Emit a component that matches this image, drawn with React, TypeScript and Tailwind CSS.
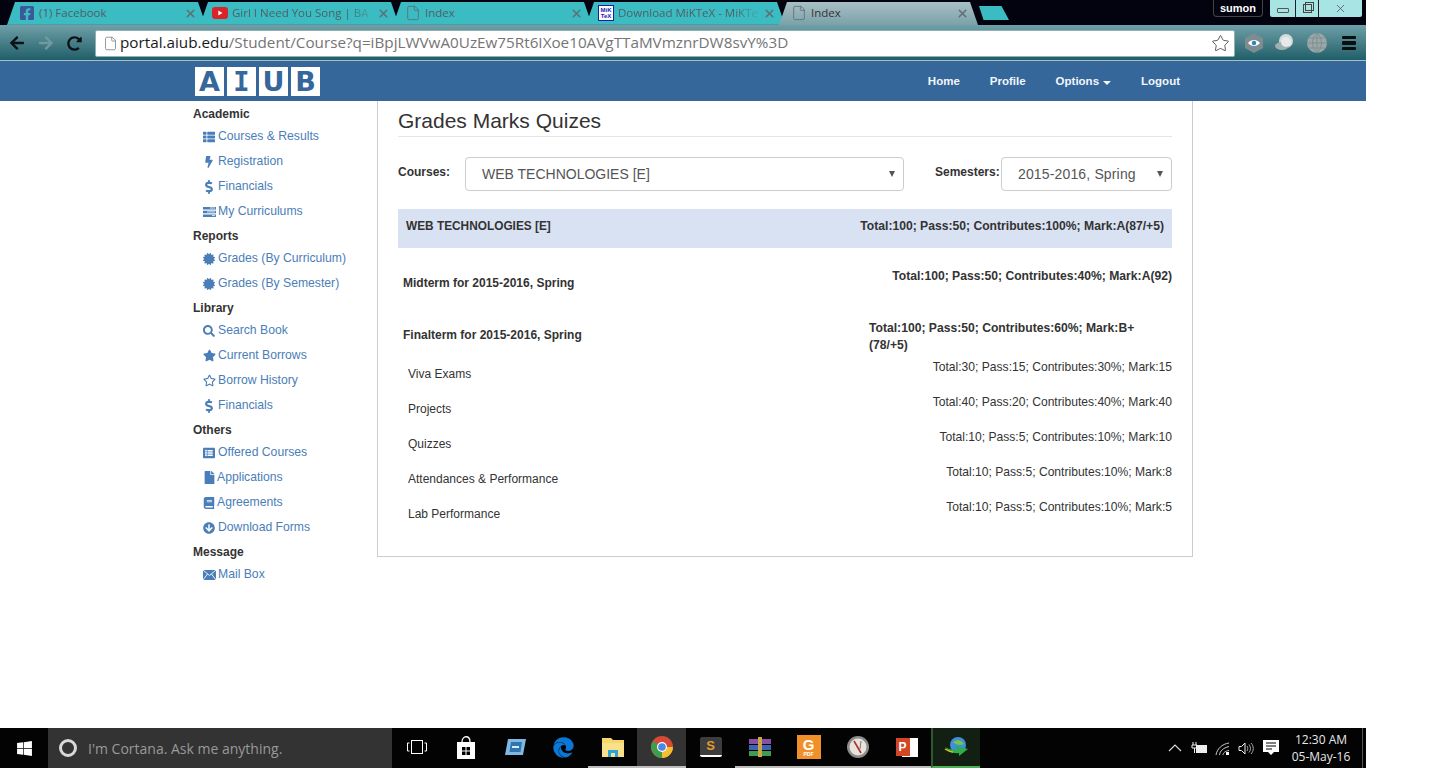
import type { ReactNode } from 'react';
import { File, Star, X } from 'lucide-react';
import {
  FaArrowCircleDown,
  FaArrowLeft,
  FaArrowRight,
  FaBolt,
  FaBook,
  FaCertificate,
  FaDollarSign,
  FaEdge,
  FaFacebookSquare,
  FaFile,
  FaListAlt,
  FaRedoAlt,
  FaRegStar,
  FaSearch,
  FaStar,
  FaThList,
  FaWindows,
} from 'react-icons/fa';

const LOGO = [
  { letter: 'A', font: 'font-["DejaVu_Sans",sans-serif]' },
  { letter: 'I', font: 'font-["DejaVu_Sans_Mono",monospace]' },
  { letter: 'U', font: 'font-["DejaVu_Sans",sans-serif]' },
  { letter: 'B', font: 'font-["DejaVu_Sans",sans-serif]' },
];
const NAV = ['Home', 'Profile'];

function TasksIcon() {
  return (
    <svg width="13" height="12" viewBox="0 0 13 12">
      <path d="M0 1h13v2.6H0zM0 4.7h13v2.6H0zM0 8.4h13V11H0z" fill="currentColor" />
      <path d="M7 2h5M4 5.900h8M9 9.600h3" stroke="#fff" strokeWidth="0.8" />
    </svg>
  );
}

function MailIcon() {
  return (
    <svg width="13" height="10" viewBox="0 0 13 10">
      <rect width="13" height="10" fill="currentColor" />
      <path d="M0 0l6.500 5.500L13 0M0 10l4.500-6M13 10L8.500 4" stroke="#fff" strokeWidth="0.9" fill="none" />
    </svg>
  );
}

const SIDEBAR: { title: string; items: { label: string; icon: ReactNode; narrow?: boolean }[] }[] = [
  {
    title: 'Academic',
    items: [
      { label: 'Courses & Results', icon: <FaThList size={12} /> },
      { label: 'Registration', icon: <FaBolt size={12} /> },
      { label: 'Financials', icon: <FaDollarSign size={14} className="-ml-[1px]" /> },
      { label: 'My Curriculums', icon: <TasksIcon /> },
    ],
  },
  {
    title: 'Reports',
    items: [
      { label: 'Grades (By Curriculum)', icon: <FaCertificate size={12} /> },
      { label: 'Grades (By Semester)', icon: <FaCertificate size={12} /> },
    ],
  },
  {
    title: 'Library',
    items: [
      { label: 'Search Book', icon: <FaSearch size={12} /> },
      { label: 'Current Borrows', icon: <FaStar size={13} /> },
      { label: 'Borrow History', icon: <FaRegStar size={13} /> },
      { label: 'Financials', icon: <FaDollarSign size={14} className="-ml-[1px]" /> },
    ],
  },
  {
    title: 'Others',
    items: [
      { label: 'Offered Courses', icon: <FaListAlt size={12} /> },
      { label: 'Applications', icon: <FaFile size={13} />, narrow: true },
      { label: 'Agreements', icon: <FaBook size={12} />, narrow: true },
      { label: 'Download Forms', icon: <FaArrowCircleDown size={12} /> },
    ],
  },
  {
    title: 'Message',
    items: [{ label: 'Mail Box', icon: <MailIcon /> }],
  },
];

const MARKS = [
  { label: 'Viva Exams', detail: 'Total:30; Pass:15; Contributes:30%; Mark:15' },
  { label: 'Projects', detail: 'Total:40; Pass:20; Contributes:40%; Mark:40' },
  { label: 'Quizzes', detail: 'Total:10; Pass:5; Contributes:10%; Mark:10' },
  { label: 'Attendances & Performance', detail: 'Total:10; Pass:5; Contributes:10%; Mark:8' },
  { label: 'Lab Performance', detail: 'Total:10; Pass:5; Contributes:10%; Mark:5' },
];

function PageFavicon() {
  return <File size={16} strokeWidth={1.2} className="text-[#5b6b70]" />;
}

function YoutubeFavicon() {
  return (
    <svg width="16" height="12" viewBox="0 0 16 12">
      <rect width="16" height="12" rx="3" fill="#d9252a" />
      <path d="M6.300 3.500v5l4.200-2.500z" fill="#fff" />
    </svg>
  );
}

function MiktexFavicon() {
  return (
    <div className="flex h-[16px] w-[16px] flex-col items-center justify-center border border-[#1a1ab0] bg-white text-[6px] font-bold leading-[6px] text-[#1a1ab0]">
      <span>MiK</span>
      <span>TeX</span>
    </div>
  );
}

const TABS: { title: string; icon: ReactNode; active?: boolean; fade?: boolean }[] = [
  { title: '(1) Facebook', icon: <FaFacebookSquare size={16} className="text-[#3b5998]" /> },
  { title: 'Girl I Need You Song | BA', icon: <YoutubeFavicon />, fade: true },
  { title: 'Index', icon: <PageFavicon /> },
  { title: 'Download MiKTeX - MiKTe', icon: <MiktexFavicon />, fade: true },
  { title: 'Index', icon: <PageFavicon />, active: true },
];

function TabStrip() {
  return (
    <div className="flex h-[25px] items-end justify-between bg-[#02030f] pl-[7px] pr-[4px]">
      <div className="flex items-end">
        {TABS.map((tab, i) => (
          <div
            key={i}
            className={
              'flex h-[23px] w-[199px] items-center pl-[12px] pr-[9px] [clip-path:polygon(8px_0,calc(100%-8px)_0,100%_100%,0_100%)] ' +
              (i > 0 ? '-ml-[6px] ' : '') +
              (tab.active
                ? 'bg-gradient-to-b from-[#a9c0c5] to-[#7ba1a9] pb-[1px]'
                : 'border-b border-[#4d9aa0] bg-[#3bbcc2]')
            }
          >
            <div className="flex w-[16px] shrink-0 justify-center">{tab.icon}</div>
            <span
              className={
                'ml-[4px] w-[144px] overflow-hidden whitespace-nowrap font-["Open_Sans",sans-serif] text-[11.500px] ' +
                (tab.active ? 'text-[#333] ' : 'text-[#4f5f66] ') +
                (tab.fade ? '[mask-image:linear-gradient(to_right,#000_80%,transparent)]' : '')
              }
            >
              {tab.title}
            </span>
            <X size={13} strokeWidth={3} className="ml-auto text-[#5e7177]" />
          </div>
        ))}
        <div className="mb-[5px] ml-[1px] h-[14px] w-[30px] bg-[#3bbcc2] [clip-path:polygon(0_0,75%_0,100%_100%,15%_100%)]" />
      </div>
      <div className="flex h-[25px] items-start">
        <div className="flex h-[17px] w-[50px] items-center justify-center rounded-b-[4px] border border-t-0 border-[#444] text-[11px] font-bold text-white">
          sumon
        </div>
        <div className="ml-[7px] flex h-[17px] w-[92px] rounded-b-[2px] bg-[#a9e4e4] text-[#333]">
          <div className="flex w-[25px] items-end justify-center pb-[4px]">
            <div className="h-[5px] w-[12px] rounded-[1px] border border-[#555]" />
          </div>
          <div className="flex w-[24px] items-center justify-center border-x border-[#222]">
            <div className="relative h-[9px] w-[9px] border border-[#444]">
              <div className="absolute -right-[3px] -top-[3px] h-[9px] w-[9px] border border-[#444]" />
            </div>
          </div>
          <div className="flex flex-1 items-center justify-center">
            <X size={13} strokeWidth={1.5} className="text-[#556]" />
          </div>
        </div>
      </div>
    </div>
  );
}

function Toolbar() {
  return (
    <div className="flex h-[36px] items-center border-b border-[#a5c0c5] bg-gradient-to-b from-[#6ea0a8] to-[#1f5f69] pt-[1px]">
      <div className="flex w-[95px] shrink-0 items-center pl-[9px]">
        <FaArrowLeft size={16} className="text-[#0b1114]" />
        <FaArrowRight size={16} className="ml-[13px] text-[#6f9aa2]" />
        <FaRedoAlt size={15} className="ml-[13px] text-[#0b1114]" />
      </div>
      <div className="flex h-[27px] w-[1140px] items-center rounded-[2px] border border-[#8fb0b5] bg-white pl-[7px] pr-[4px]">
        <File size={15} strokeWidth={1.2} className="text-[#777]" />
        <span className='-mt-[2px] ml-[2px] font-["Open_Sans",sans-serif] text-[15.250px] text-[#757575]'>
          <span className="text-[#1a1a1a]">portal.aiub.edu</span>
          /Student/Course?q=iBpjLWVwA0UzEw75Rt6IXoe10AVgTTaMVmznrDW8svY%3D
        </span>
        <Star size={19} strokeWidth={1} className="ml-auto text-[#333]" />
      </div>
      <div className="flex flex-1 items-center pl-[9px]">
        <svg width="20" height="20" viewBox="0 0 20 20">
          <path d="M10 0l9 5v10l-9 5-9-5V5z" fill="#7c8c90" />
          <path d="M4 10c3-4 9-4 12 0-3 4-9 4-12 0z" fill="#fff" />
          <circle cx="10" cy="10" r="2.200" fill="#2a86b8" />
        </svg>
        <svg width="22" height="20" viewBox="0 0 22 20" className="ml-[10px]">
          <circle cx="12" cy="8" r="7" fill="#d5dadb" />
          <ellipse cx="8" cy="13" rx="7" ry="4" fill="#9fb0b3" />
          <circle cx="12" cy="9" r="5" fill="#e6eaea" />
        </svg>
        <svg width="20" height="20" viewBox="0 0 20 20" className="ml-[11px]">
          <circle cx="10" cy="10" r="10" fill="#9aa8aa" />
          <path d="M0 10h20M10 0v20M2 5h16M2 15h16M10 0c-6 5-6 15 0 20M10 0c6 5 6 15 0 20" stroke="#7b8a8c" strokeWidth="0.8" fill="none" />
        </svg>
        <div className="ml-[15px] flex w-[14px] flex-col gap-[2px]">
          <div className="h-[3.500px] rounded-[1px] bg-[#0a0f10]" />
          <div className="h-[3.500px] rounded-[1px] bg-[#0a0f10]" />
          <div className="h-[3.500px] rounded-[1px] bg-[#0a0f10]" />
        </div>
      </div>
    </div>
  );
}

function SiteNav() {
  return (
    <div className="flex h-[40px] items-center bg-[#35679a] pl-[195px] pr-[171px] text-[11.500px] font-bold text-[#f2f6fa]">
      <div className="flex gap-[3px]">
        {LOGO.map(({ letter, font }) => (
          <div
            key={letter}
            className={
              'flex h-[29px] w-[29px] items-center justify-center bg-white text-[27px] font-bold leading-none text-[#35679a] ' +
              font
            }
          >
            {letter}
          </div>
        ))}
      </div>
      <div className="ml-auto flex items-center pt-[1px]">
        {NAV.map((item) => (
          <span key={item} className="px-[15px]">
            {item}
          </span>
        ))}
        <span className="flex items-center px-[15px]">
          Options
          <span className="ml-[4px] mt-[2px] h-0 w-0 border-x-[4px] border-t-[4px] border-x-transparent border-t-[#f2f6fa]" />
        </span>
        <span className="px-[15px]">Logout</span>
      </div>
    </div>
  );
}

function Sidebar() {
  return (
    <div className="w-[184px] shrink-0 text-[12.200px]">
      {SIDEBAR.map((group) => (
        <div key={group.title}>
          <div className="flex h-[22px] items-end text-[12px] font-bold leading-[17px] text-[#333]">
            {group.title}
          </div>
          {group.items.map((item) => (
            <div key={item.label} className="flex h-[25px] items-center pl-[10px] pt-[2px] text-[#4a7eb8]">
              <div className={'flex shrink-0 ' + (item.narrow ? 'w-[14px]' : 'w-[15px]')}>{item.icon}</div>
              <span className="whitespace-nowrap">{item.label}</span>
            </div>
          ))}
        </div>
      ))}
    </div>
  );
}

function SelectBox({ value, className }: { value: string; className: string }) {
  return (
    <div
      className={
        'flex h-[34px] items-center justify-between rounded-[4px] border border-[#ccc] pl-[16px] pr-[8px] text-[14px] text-[#555] ' +
        className
      }
    >
      <span className="whitespace-nowrap">{value}</span>
      <span className="h-0 w-0 border-x-[3px] border-t-[6px] border-x-transparent border-t-[#555]" />
    </div>
  );
}

function GradesPanel() {
  return (
    <div className="h-[456px] w-[816px] shrink-0 border-x border-b border-[#ccc] px-[20px] text-[12px] leading-[17px] text-[#333]">
      <div className="mb-[20px] flex h-[36px] items-end border-b border-[#e5e5e5] pb-[2px] text-[21px] leading-[26px]">
        Grades Marks Quizes
      </div>
      <div className="flex items-start">
        <span className="w-[67px] pt-[7px] font-bold">Courses:</span>
        <SelectBox value="WEB TECHNOLOGIES [E]" className="w-[439px]" />
        <span className="ml-[31px] w-[66px] pt-[7px] font-bold">Semesters:</span>
        <SelectBox value="2015-2016, Spring" className="w-[171px] tracking-[0.15px]" />
      </div>
      <div className="mt-[18px] flex h-[39px] justify-between bg-[#d9e2f2] pl-[8px] pr-[8px] pt-[9px] font-bold">
        <span className="text-[11.850px]">WEB TECHNOLOGIES [E]</span>
        <span className="text-[12.150px]">Total:100; Pass:50; Contributes:100%; Mark:A(87/+5)</span>
      </div>
      <div className="flex h-[71px] justify-between pt-[20px] font-bold">
        <span className="pl-[5px] pt-[7px]">Midterm for 2015-2016, Spring</span>
        <span className="text-[12.150px]">Total:100; Pass:50; Contributes:40%; Mark:A(92)</span>
      </div>
      <div className="flex h-[38px] justify-between font-bold">
        <span className="pl-[5px] pt-[8px]">Finalterm for 2015-2016, Spring</span>
        <span className="w-[303px] pt-px text-[12.150px]">
          Total:100; Pass:50; Contributes:60%; Mark:B+
          <br />
          (78/+5)
        </span>
      </div>
      {MARKS.map((row) => (
        <div key={row.label} className="flex h-[35px] justify-between">
          <span className="pl-[10px] pt-[9px]">{row.label}</span>
          <span className="pt-[2px] text-[12.100px]">{row.detail}</span>
        </div>
      ))}
    </div>
  );
}

function ChromeIcon() {
  return (
    <svg width="22" height="22" viewBox="0 0 22 22">
      <circle cx="11" cy="11" r="11" fill="#d84a38" />
      <path d="M11 11L1.500 16.500A11 11 0 0 0 11 22z" fill="#3f9d4d" />
      <path d="M11 11l-9.500 5.500A11 11 0 0 1 2 5z" fill="#3f9d4d" />
      <path d="M11 11h11A11 11 0 0 1 11 22z" fill="#f2c230" />
      <circle cx="11" cy="11" r="5" fill="#fff" />
      <circle cx="11" cy="11" r="3.800" fill="#4a88e8" />
    </svg>
  );
}

const TASK_APPS: { icon: ReactNode; underline?: string; bg?: string }[] = [
  {
    icon: (
      <svg width="20" height="14" viewBox="0 0 20 14">
        <rect x="4.500" y="0.500" width="11" height="13" stroke="#fff" fill="none" />
        <path d="M2.500 3H.500v8h2M17.500 3h2v8h-2" stroke="#fff" fill="none" />
      </svg>
    ),
  },
  {
    icon: (
      <svg width="20" height="23" viewBox="0 0 20 23">
        <path d="M6 6c0-7 8-7 8 0" stroke="#fff" strokeWidth="1.300" fill="none" />
        <path d="M1 6h18v17H1z" fill="#fff" />
        <path d="M6 11h3.500v3.500H6zM10.500 11H14v3.500h-3.500zM6 15.500h3.500V19H6zM10.500 15.500H14V19h-3.500z" fill="#000" />
      </svg>
    ),
  },
  {
    icon: (
      <svg width="23" height="16" viewBox="0 0 23 16">
        <path d="M5 0h18l-3 16H2z" fill="#7fb8e0" />
        <path d="M8 3h11l-1.500 10H6.500z" fill="#2f76b0" />
        <path d="M9 7h7v2H9z" fill="#dcecf8" />
      </svg>
    ),
  },
  { icon: <FaEdge size={21} className="text-[#0a78d6]" /> },
  {
    underline: 'border-[#bdbdbd]',
    icon: (
      <svg width="22" height="19" viewBox="0 0 22 19">
        <path d="M0 0h9l2 2h11v17H0z" fill="#f5d76e" />
        <path d="M0 5h22v14H0z" fill="#fbe08a" />
        <path d="M6 12h10v7h-3v-4H9v4H6z" fill="#2ba3d8" />
      </svg>
    ),
  },
  { underline: 'border-[#bdbdbd]', bg: 'bg-[#333]', icon: <ChromeIcon /> },
  {
    icon: (
      <div className="flex h-[20px] w-[22px] items-center justify-center rounded-[2px] border-b-2 border-white bg-[#3d3d3d] text-[13px] font-bold text-[#e69a2e]">
        S
      </div>
    ),
  },
  {
    underline: 'border-[#bdbdbd]',
    icon: (
      <svg width="24" height="20" viewBox="0 0 24 20">
        <path d="M1 2h22v5H1z" fill="#8a4f9e" />
        <path d="M1 8h22v5H1z" fill="#3d63b8" />
        <path d="M1 14h22v5H1z" fill="#3f9d4d" />
        <path d="M10 0h4v20h-4z" fill="#c9a64a" />
      </svg>
    ),
  },
  {
    underline: 'border-[#bdbdbd]',
    icon: (
      <div className="relative flex h-[24px] w-[24px] flex-col items-center justify-center bg-[#f0902a] font-bold leading-none text-white">
        <span className="text-[15px]">G</span>
        <span className="text-[5px]">PDF</span>
      </div>
    ),
  },
  {
    underline: 'border-[#bdbdbd]',
    icon: (
      <svg width="22" height="22" viewBox="0 0 22 22">
        <circle cx="11" cy="11" r="11" fill="#8c8c8c" />
        <circle cx="11" cy="11" r="8.500" fill="#e8e4dc" />
        <path d="M7 5l7 12" stroke="#b03030" strokeWidth="1.600" />
        <path d="M14 5l-1 8" stroke="#777" strokeWidth="1" />
      </svg>
    ),
  },
  {
    underline: 'border-[#bdbdbd]',
    icon: (
      <div className="relative flex h-[22px] w-[22px] justify-end">
        <div className="h-[19px] w-[16px] self-center bg-white" />
        <div className="absolute left-0 top-[2px] flex h-[18px] w-[14px] items-center justify-center bg-[#d24726] text-[12px] font-bold text-white">
          P
        </div>
      </div>
    ),
  },
  {
    underline: 'border-[#4caf50]',
    bg: 'bg-[#141f14] border-l-2 border-l-[#2c5a2c]',
    icon: (
      <svg width="25" height="21" viewBox="0 0 25 21">
        <circle cx="14" cy="8" r="8" fill="#3f8fd8" />
        <path d="M9 5c4-3 9-2 11 2-4 2-8 1-11-2z" fill="#7cc24a" />
        <path d="M1 10c5 3 9 3 13 2l-2-3 12 3-9 7v-3c-6 1-11-2-14-6z" fill="#2fae4e" />
        <path d="M1 12c3 2 5 3 8 3" stroke="#e0c020" strokeWidth="1.500" fill="none" />
      </svg>
    ),
  },
];

function Tray() {
  return (
    <div className="flex flex-1 items-center pl-[188px] text-[#e8e8e8]">
      <svg width="14" height="8" viewBox="0 0 14 8" className="shrink-0">
        <path d="M1 7l6-6 6 6" stroke="#ddd" strokeWidth="1.100" fill="none" />
      </svg>
      <svg width="17" height="12" viewBox="0 0 17 12" className="ml-[9px] shrink-0">
        <path d="M2 0v3M5 0v3M1 3h5v3H1zM3.500 6v5" stroke="#eee" strokeWidth="1" fill="none" />
        <rect x="5" y="3" width="11" height="8" fill="#eee" />
      </svg>
      <svg width="15" height="13" viewBox="0 0 15 13" className="ml-[7px] shrink-0">
        <path d="M1 13C2 7 7 2 14 1M4.500 13C5 9 8 6 14 4.500M8 13c0-2 2-4 6-4.500" stroke="#ccc" strokeWidth="1" fill="none" />
        <path d="M11 10h3v3h-3z" fill="#fff" />
      </svg>
      <svg width="16" height="13" viewBox="0 0 16 13" className="ml-[8px] shrink-0">
        <path d="M1 4.500h2.500L7 1v11L3.500 8.500H1z" stroke="#eee" strokeWidth="1" fill="none" />
        <path d="M9 4c1 1.500 1 3.500 0 5M11 2.500c2 2.500 2 5.500 0 8M13 1c3 3 3 8 0 11" stroke="#bbb" strokeWidth="0.900" fill="none" />
      </svg>
      <svg width="16" height="16" viewBox="0 0 16 16" className="ml-[9px] shrink-0">
        <path d="M0 0h16v12h-5l-3 3-3-3H0z" fill="#fff" />
        <path d="M3 3h10M3 6h10M3 9h6" stroke="#000" strokeWidth="1" />
      </svg>
      <div className='ml-[9px] flex w-[66px] shrink-0 flex-col items-center font-["Open_Sans",sans-serif] text-[12px] leading-[17px] text-[#e8e8e8]'>
        <span>12:30 AM</span>
        <span>05-May-16</span>
      </div>
      <div className="ml-auto mr-[3px] h-full w-px bg-[#555]" />
    </div>
  );
}

function Taskbar() {
  return (
    <div className="flex h-[40px] shrink-0 bg-[#030303]">
      <div className="flex w-[48px] items-center justify-center">
        <FaWindows size={17} className="text-white" />
      </div>
      <div className="flex w-[344px] items-center bg-[#333] pl-[11px]">
        <div className="h-[18px] w-[18px] rounded-full border-[3px] border-[#d8d8d8]" />
        <span className='ml-[11px] font-["Open_Sans",sans-serif] text-[14px] text-[#999]'>
          I'm Cortana. Ask me anything.
        </span>
      </div>
      {TASK_APPS.map((app, i) => (
        <div
          key={i}
          className={
            'flex h-[40px] w-[49px] items-center justify-center border-b-2 ' +
            (app.underline ?? 'border-transparent') +
            ' ' +
            (app.bg ?? '')
          }
        >
          {app.icon}
        </div>
      ))}
      <Tray />
    </div>
  );
}

export default function App() {
  return (
    <div className='h-[768px] w-[1430px] overflow-hidden bg-white font-["Liberation_Sans",Arial,sans-serif]'>
      <div className="flex h-full w-[1366px] flex-col">
        <TabStrip />
        <Toolbar />
        <SiteNav />
        <div className="flex min-h-0 flex-1 pl-[193px]">
          <Sidebar />
          <GradesPanel />
        </div>
        <Taskbar />
      </div>
    </div>
  );
}
